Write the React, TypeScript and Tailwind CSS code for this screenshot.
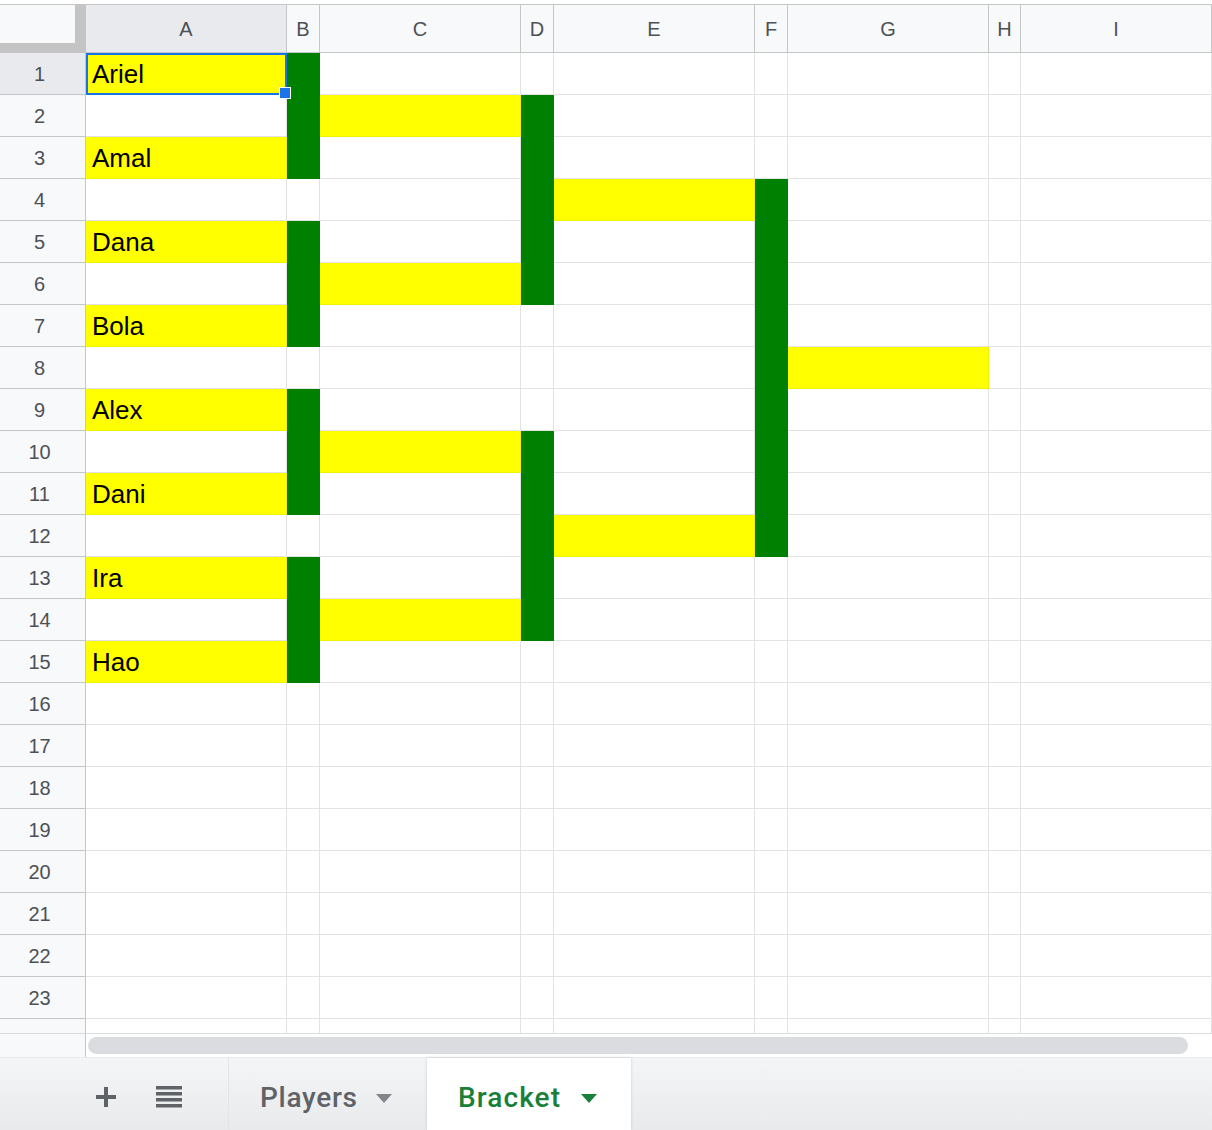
import React from 'react';

const COLS = ['A', 'B', 'C', 'D', 'E', 'F', 'G', 'H', 'I'];
const ROW_COUNT = 24;

const NAMES: Record<number, string> = {
  1: 'Ariel',
  3: 'Amal',
  5: 'Dana',
  7: 'Bola',
  9: 'Alex',
  11: 'Dani',
  13: 'Ira',
  15: 'Hao',
};

const YELLOW = new Set(['A1', 'A3', 'A5', 'A7', 'A9', 'A11', 'A13', 'A15', 'C2', 'C6', 'C10', 'C14', 'E4', 'E12', 'G8']);

const range = (col: string, from: number, to: number) => {
  const out: string[] = [];
  for (let r = from; r <= to; r++) out.push(`${col}${r}`);
  return out;
};

const GREEN = new Set([
  ...range('B', 1, 3),
  ...range('B', 5, 7),
  ...range('B', 9, 11),
  ...range('B', 13, 15),
  ...range('D', 2, 6),
  ...range('D', 10, 14),
  ...range('F', 4, 12),
]);

function Triangle({ className }: { className: string }) {
  return (
    <svg width="16" height="9" viewBox="0 0 16 9" className={className}>
      <path d="M0 0h16L8 9z" fill="currentColor" />
    </svg>
  );
}

function Cell({ col, row }: { col: string; row: number }) {
  const key = `${col}${row}`;
  const isYellow = YELLOW.has(key);
  const isGreen = GREEN.has(key);
  const bg = isYellow
    ? 'bg-[#ffff00] border-[#f2f200]'
    : isGreen
      ? 'bg-[#008000] border-[#008000]'
      : 'bg-white border-[#e2e3e3]';
  const selected = key === 'A1';

  return (
    <div className={`relative h-[42px] border-r border-b flex items-center ${bg}`}>
      {col === 'A' && NAMES[row] && (
        <span className="pl-[6px] pt-[2px] text-[26px] text-black whitespace-nowrap font-['Liberation_Sans',Arial,sans-serif]">
          {NAMES[row]}
        </span>
      )}
      {selected && (
        <>
          <div className="absolute left-0 top-0 w-[201px] h-[42px] border-2 border-[#1a73e8] pointer-events-none z-10" />
          <div className="absolute left-[193px] top-[34px] w-[12px] h-[12px] bg-[#1a73e8] border border-white z-20" />
        </>
      )}
    </div>
  );
}

export default function App() {
  const rows = Array.from({ length: ROW_COUNT }, (_, i) => i + 1);

  return (
    <div className="w-[1212px] h-[1130px] bg-white overflow-hidden flex flex-col font-['Liberation_Sans',Arial,sans-serif]">
      <div className="h-[4px] bg-white" />
      <div className="h-[1030px] overflow-hidden border-t border-[#c4c7c5] border-b border-b-[#dadce0]">
        <div className="grid grid-cols-[86px_201px_33px_201px_33px_201px_33px_201px_32px_1fr]">
          {/* corner */}
          <div className="h-[48px] bg-[#c4c4c4] flex">
            <div className="w-[75px] h-[38px] bg-[#f8f9fa]" />
          </div>
          {COLS.map((c) => (
            <div
              key={c}
              className={`h-[48px] border-r border-b border-[#c4c7c5] flex items-center justify-center text-[20px] text-[#4d5156] ${
                c === 'A' ? 'bg-[#e8eaed]' : 'bg-[#f8f9fa]'
              }`}
            >
              {c}
            </div>
          ))}

          {rows.map((r) => (
            <React.Fragment key={r}>
              <div
                className={`h-[42px] border-r border-b border-[#c4c7c5] flex items-center justify-center pr-[6px] text-[20px] text-[#4d5156] ${
                  r === 1 ? 'bg-[#e8eaed]' : 'bg-[#f8f9fa]'
                }`}
              >
                {r}
              </div>
              {COLS.map((c) => (
                <Cell key={c} col={c} row={r} />
              ))}
            </React.Fragment>
          ))}
        </div>
      </div>

      {/* horizontal scrollbar */}
      <div className="h-[23px] flex bg-white">
        <div className="w-[86px] border-r border-[#c4c7c5] bg-[#f8f9fa]" />
        <div className="flex-1 pl-[2px] pr-[24px] pt-[3px]">
          <div className="h-[17px] rounded-full bg-[#dadce0]" />
        </div>
      </div>

      {/* sheet tabs */}
      <div className="h-[73px] flex items-stretch bg-gradient-to-b from-[#f4f5f6] to-[#e8eaeb] border-t border-[#e8eaed]">
        <div className="w-[228px] flex items-center pt-[6px] pl-[94px] gap-[38px] text-[#5f6368]">
          <svg width="24" height="24" viewBox="0 0 24 24">
            <path d="M12 2v20M2 12h20" stroke="currentColor" strokeWidth="4" fill="none" />
          </svg>
          <svg width="26" height="22" viewBox="0 0 26 22">
            <rect x="0" y="0" width="26" height="3.5" fill="currentColor" />
            <rect x="0" y="6" width="26" height="3.5" fill="currentColor" />
            <rect x="0" y="12" width="26" height="3.5" fill="currentColor" />
            <rect x="0" y="18" width="26" height="3.5" fill="currentColor" />
          </svg>
        </div>
        <div className="w-[199px] border-l border-[#e3e5e7] flex items-center pt-[8px] pl-[31px] gap-[18px] text-[#5f6368]">
          <span className="text-[28px] font-medium font-['Roboto',Arial,sans-serif] tracking-[0.7px]">Players</span>
          <Triangle className="text-[#80868b]" />
        </div>
        <div className="w-[204px] bg-white shadow-[0_0_3px_rgba(0,0,0,0.15)] flex items-center pt-[8px] pl-[31px] gap-[20px] text-[#188038]">
          <span className="text-[28px] font-medium font-['Roboto',Arial,sans-serif] tracking-[1.1px]">Bracket</span>
          <Triangle className="text-[#188038]" />
        </div>
        <div className="flex-1" />
      </div>
    </div>
  );
}
